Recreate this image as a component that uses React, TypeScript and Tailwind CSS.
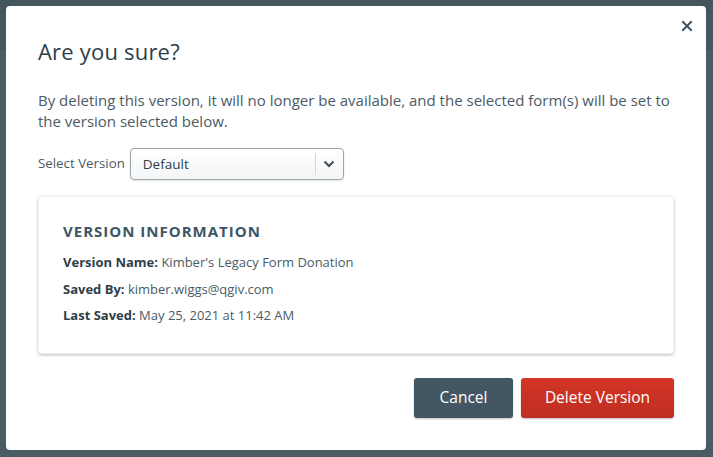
import React from "react";

export default function App() {
  return (
    <div
      className="w-[713px] h-[457px] bg-[#4b5c64] overflow-hidden relative"
      style={{ fontFamily: '"Open Sans", "Liberation Sans", sans-serif' }}
    >
      <div className="absolute left-0 top-0 w-full h-[50px] bg-[#46565e]" />
      <div className="absolute left-[6px] top-[6px] w-[700px] h-[444px] bg-white rounded-[4px] px-[32px] pt-[30px]">
        <button className="absolute right-[13px] top-[14px] text-[#3e5463]">
          <svg width="12" height="12" viewBox="0 0 12 12">
            <path d="M2 2 L10 10 M10 2 L2 10" stroke="#3e5463" strokeWidth="2" strokeLinecap="square" />
          </svg>
        </button>
        <h1 className="text-[22px] leading-[30px] text-[#2e3e48] tracking-[0.2px]">Are you sure?</h1>
        <p className="mt-[24px] text-[15px] leading-[21px] text-[#4b5b66]">
          By deleting this version, it will no longer be available, and the selected form(s) will be set to
          the version selected below.
        </p>
        <div className="mt-[16px] flex items-center gap-[5px]">
          <span className="text-[13.3px] text-[#4b5b66]">Select Version</span>
          <div className="w-[214px] h-[32px] border border-[#9aa5ac] rounded-[4px] flex items-center bg-gradient-to-b from-white to-[#f3f5f6] shadow-[0_1px_2px_rgba(0,0,0,0.12)]">
            <span className="flex-1 pl-[12px] text-[13.5px] text-[#2e3e48]">Default</span>
            <div className="w-px h-[22px] bg-[#d3d8db]" />
            <div className="w-[27px] flex justify-center">
              <svg width="12" height="8" viewBox="0 0 12 8">
                <path d="M1.5 1.5 L6 6 L10.5 1.5" stroke="#3e5463" strokeWidth="2.2" fill="none" />
              </svg>
            </div>
          </div>
        </div>
        <div className="mt-[16px] h-[158px] rounded-[4px] border border-[#f0f1f2] shadow-[0_1px_3px_rgba(40,60,75,0.35)] px-[24px] pt-[24px]">
          <h2 className="text-[15px] font-bold tracking-[1px] text-[#3d5564] leading-[20px]">VERSION INFORMATION</h2>
          <div className="mt-[12px] flex flex-col gap-[8px] text-[13px] leading-[18.5px] text-[#4b5b66]">
            <div>
              <span className="font-bold text-[#2e3e48]">Version Name:</span> Kimber's Legacy Form Donation
            </div>
            <div>
              <span className="font-bold text-[#2e3e48]">Saved By:</span> kimber.wiggs@qgiv.com
            </div>
            <div>
              <span className="font-bold text-[#2e3e48]">Last Saved:</span> May 25, 2021 at 11:42 AM
            </div>
          </div>
        </div>
        <div className="mt-[24px] flex justify-end gap-[8px]">
          <button className="w-[99px] h-[40px] rounded-[3px] bg-[#435663] text-white text-[15.5px] shadow-[0_1px_2px_rgba(0,0,0,0.25)]">
            Cancel
          </button>
          <button className="w-[153px] h-[40px] rounded-[3px] bg-gradient-to-b from-[#d33526] to-[#bf2e22] text-white text-[15.5px] shadow-[0_1px_2px_rgba(0,0,0,0.25)]">
            Delete Version
          </button>
        </div>
      </div>
    </div>
  );
}
